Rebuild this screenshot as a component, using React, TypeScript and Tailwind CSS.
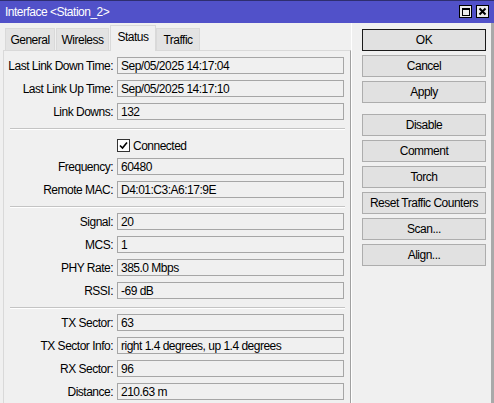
import React from "react";

type Field = { label: string; value: string };

const groupA: Field[] = [
  { label: "Last Link Down Time:", value: "Sep/05/2025 14:17:04" },
  { label: "Last Link Up Time:", value: "Sep/05/2025 14:17:10" },
  { label: "Link Downs:", value: "132" },
];

const groupB: Field[] = [
  { label: "Frequency:", value: "60480" },
  { label: "Remote MAC:", value: "D4:01:C3:A6:17:9E" },
];

const groupC: Field[] = [
  { label: "Signal:", value: "20" },
  { label: "MCS:", value: "1" },
  { label: "PHY Rate:", value: "385.0 Mbps" },
  { label: "RSSI:", value: "-69 dB" },
];

const groupD: Field[] = [
  { label: "TX Sector:", value: "63" },
  { label: "TX Sector Info:", value: "right 1.4 degrees, up 1.4 degrees" },
  { label: "RX Sector:", value: "96" },
  { label: "Distance:", value: "210.63 m" },
];

const tabs = [
  { name: "General", w: "w-[50px]" },
  { name: "Wireless", w: "w-[53px]" },
  { name: "Status", w: "w-[46px]", active: true },
  { name: "Traffic", w: "w-[44px]" },
];

function Row({ label, value }: Field) {
  return (
    <div className="flex h-[17px] items-center">
      <div className="w-[110px] shrink-0 pr-[1px] text-right leading-none">{label}</div>
      <div className="ml-[3px] flex h-[17px] w-[227px] items-center border border-[#a6a6a6] bg-[#f0f0f0] pl-[3px] leading-none">
        {value}
      </div>
    </div>
  );
}

function Separator({ mb }: { mb: string }) {
  return <div className={`ml-[6px] mr-[5px] mt-[8px] h-[2px] border-t border-b border-t-[#c4c4c4] border-b-white ${mb}`} />;
}

function Btn({ label, primary }: { label: string; primary?: boolean }) {
  return (
    <div
      className={
        primary
          ? "flex h-[22px] w-[124px] items-center justify-center border border-[#1a1a1a] bg-[#e1e1e1] leading-none"
          : "flex h-[22px] w-[124px] items-center justify-center border border-[#adadad] bg-[#e1e1e1] leading-none"
      }
    >
      {label}
    </div>
  );
}

export default function App() {
  return (
    <div
      className="h-[403px] w-[494px] overflow-hidden bg-[#f0f0f0] text-[12px] tracking-[-0.5px] text-black"
      style={{ fontFamily: '"Liberation Sans", Arial, sans-serif' }}
    >
      {/* title bar */}
      <div className="flex h-[23px] items-center border-t border-[#2e2e70] bg-[#5151c9] pl-[5px] pr-[5px]">
        <span className="text-white">Interface &lt;Station_2&gt;</span>
        <div className="ml-auto flex gap-[4px] pb-[1px]">
          <div className="flex h-[13px] w-[13px] items-center justify-center border border-black bg-[#ececec]">
            <div className="h-[8px] w-[8px] border border-t-2 border-black" />
          </div>
          <div className="flex h-[13px] w-[13px] items-center justify-center border border-black bg-[#ececec]">
            <svg width="9" height="9" viewBox="0 0 9 9">
              <path d="M1.5 1.5 L7.5 7.5 M7.5 1.5 L1.5 7.5" stroke="#000" strokeWidth="2" />
            </svg>
          </div>
        </div>
      </div>

      <div className="flex h-[380px] border-r-[3px] border-[#a9a9a9]">
        {/* left side: tabs and status page */}
        <div className="flex w-[351px] flex-col pl-[3px]">
          <div className="flex h-[27px] items-end pl-[2px]">
            {tabs.map((t) =>
              t.active ? (
                <div
                  key={t.name}
                  className={`relative z-10 -mb-px flex h-[26px] ${t.w} items-center justify-center border border-b-0 border-[#d9d9d9] bg-[#f0f0f0] pb-[3px] leading-none`}
                >
                  {t.name}
                </div>
              ) : (
                <div
                  key={t.name}
                  className={`mr-[1px] flex h-[22px] ${t.w} items-center justify-center border border-b-0 border-[#d9d9d9] bg-[#e3e3e3] leading-none`}
                >
                  {t.name}
                </div>
              )
            )}
          </div>
          <div className="flex-1 border-l border-t border-r border-[#d9d9d9] border-r-[#a0a0a0] pt-[6px]">
            <div className="flex flex-col gap-[6px]">
              {groupA.map((f) => (
                <Row key={f.label} {...f} />
              ))}
            </div>
            <Separator mb="mb-[5px]" />
            <div className="flex flex-col gap-[6px]">
              <div className="flex h-[17px] items-center pl-[113px] pt-[4px]">
                <div className="flex h-[13px] w-[13px] items-center justify-center border border-[#333] bg-white">
                  <svg width="9" height="9" viewBox="0 0 9 9">
                    <path d="M1 4.5 L3.5 7 L8 1.5" fill="none" stroke="#000" strokeWidth="1.6" />
                  </svg>
                </div>
                <span className="ml-[3px] leading-none">Connected</span>
              </div>
              {groupB.map((f) => (
                <Row key={f.label} {...f} />
              ))}
            </div>
            <Separator mb="mb-[5px]" />
            <div className="flex flex-col gap-[6px]">
              {groupC.map((f) => (
                <Row key={f.label} {...f} />
              ))}
            </div>
            <Separator mb="mb-[5px]" />
            <div className="flex flex-col gap-[6px]">
              {groupD.map((f) => (
                <Row key={f.label} {...f} />
              ))}
            </div>
          </div>
        </div>

        {/* right side: buttons */}
        <div className="flex flex-1 flex-col border-l border-white pl-[10px] pt-[6px]">
          <div className="flex flex-col gap-[4px]">
            <Btn label="OK" primary />
            <Btn label="Cancel" />
            <Btn label="Apply" />
          </div>
          <div className="mt-[11px] flex flex-col gap-[4px]">
            <Btn label="Disable" />
            <Btn label="Comment" />
            <Btn label="Torch" />
            <Btn label="Reset Traffic Counters" />
            <Btn label="Scan..." />
            <Btn label="Align..." />
          </div>
        </div>
      </div>
    </div>
  );
}
